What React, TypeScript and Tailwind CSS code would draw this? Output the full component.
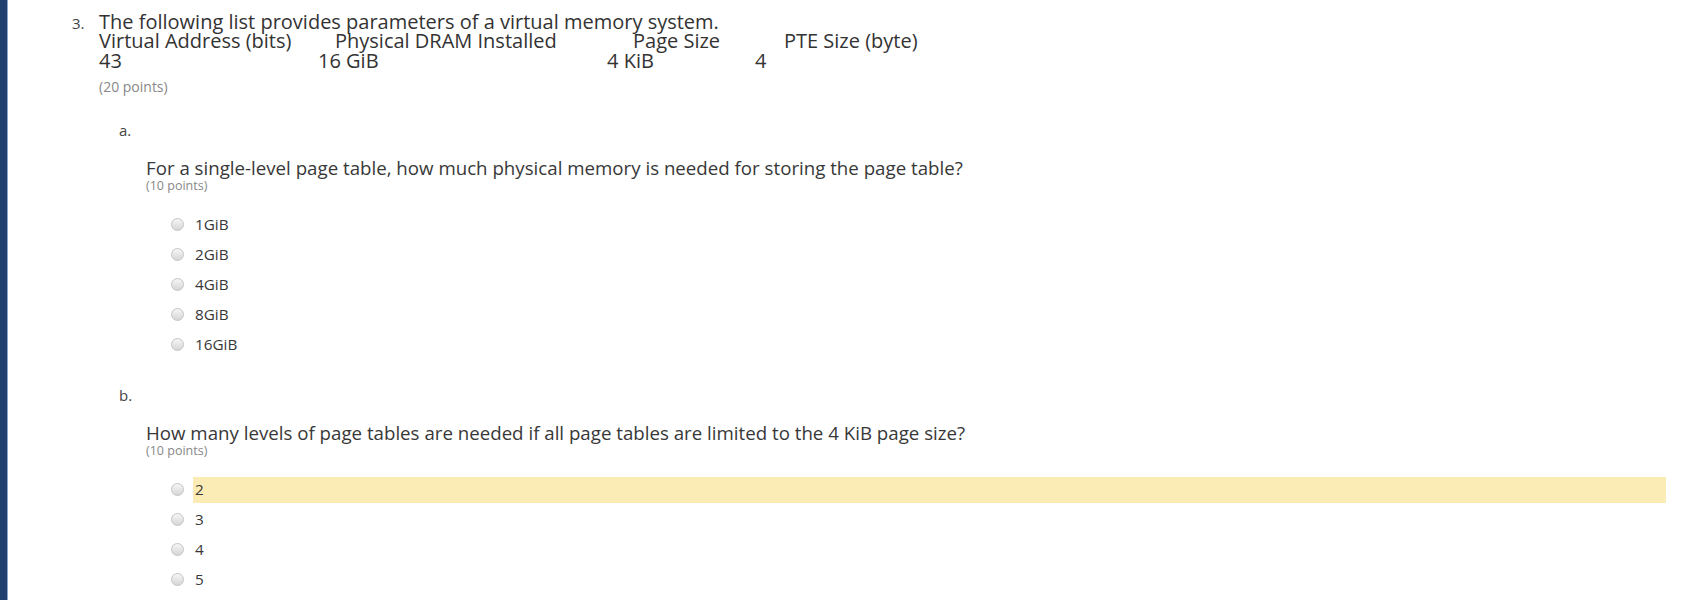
import React from "react";

type Part = {
  label: string;
  question: string;
  points: string;
  options: string[];
  highlighted?: number;
};

const parts: Part[] = [
  {
    label: "a.",
    question:
      "For a single-level page table, how much physical memory is needed for storing the page table?",
    points: "(10 points)",
    options: ["1GiB", "2GiB", "4GiB", "8GiB", "16GiB"],
  },
  {
    label: "b.",
    question:
      "How many levels of page tables are needed if all page tables are limited to the 4 KiB page size?",
    points: "(10 points)",
    options: ["2", "3", "4", "5"],
    highlighted: 0,
  },
];

function Radio() {
  return (
    <span className="block h-[13px] w-[13px] shrink-0 rounded-full border border-[#c4c4c4] bg-gradient-to-b from-[#f6f6f6] to-[#d6d6d6]" />
  );
}

function QuestionPart({ part, first }: { part: Part; first: boolean }) {
  return (
    <section className={first ? "mt-[23px]" : "mt-[25px]"}>
      <div className="pl-[47px] text-[15px] leading-[20px] text-[#444]">{part.label}</div>
      <div className="mt-[17px] pl-[74px]">
        <p className="text-[18.7px] leading-[21px] text-[#383838]">{part.question}</p>
        <p className="text-[12.5px] leading-[16px] text-[#888]">{part.points}</p>
      </div>
      <ul className="mt-[16px] pl-[99px]">
        {part.options.map((opt, i) => (
          <li key={opt} className="flex h-[30px] items-center">
            <Radio />
            <span
              className={
                "ml-[9px] flex h-[26px] items-center pl-[2px] text-[15.3px] text-[#383838] " +
                (part.highlighted === i ? "mr-[15px] flex-1 bg-[#fbecb6]" : "")
              }
            >
              {opt}
            </span>
          </li>
        ))}
      </ul>
    </section>
  );
}

export default function App() {
  return (
    <main
      className="flex h-[600px] w-full overflow-hidden bg-white"
      style={{ fontFamily: '"Open Sans", "Liberation Sans", sans-serif' }}
    >
      <div className="w-[8px] shrink-0 border-r border-[#8ca5cb] bg-[#1f3f6f]" />

      <div className="flex-1 pl-[64px] pt-[11.5px]">
        <div className="flex items-baseline">
          <span className="w-[27px] shrink-0 text-[15px] leading-[19.5px] text-[#444]">3.</span>
          <div className="text-[20px] leading-[19.5px] text-[#333]">
            <p>The following list provides parameters of a virtual memory system.</p>
            <div className="flex">
              <span className="w-[236px] shrink-0">Virtual Address (bits)</span>
              <span className="w-[298px] shrink-0">Physical DRAM Installed</span>
              <span className="w-[151px] shrink-0">Page Size</span>
              <span>PTE Size (byte)</span>
            </div>
            <div className="flex">
              <span className="w-[219px] shrink-0">43</span>
              <span className="w-[289px] shrink-0">16 GiB</span>
              <span className="w-[148px] shrink-0">4 KiB</span>
              <span>4</span>
            </div>
            <p className="mt-[6.5px] text-[14px] leading-[20px] text-[#888]">(20 points)</p>
          </div>
        </div>

        {parts.map((part, i) => (
          <QuestionPart key={part.label} part={part} first={i === 0} />
        ))}
      </div>
    </main>
  );
}
